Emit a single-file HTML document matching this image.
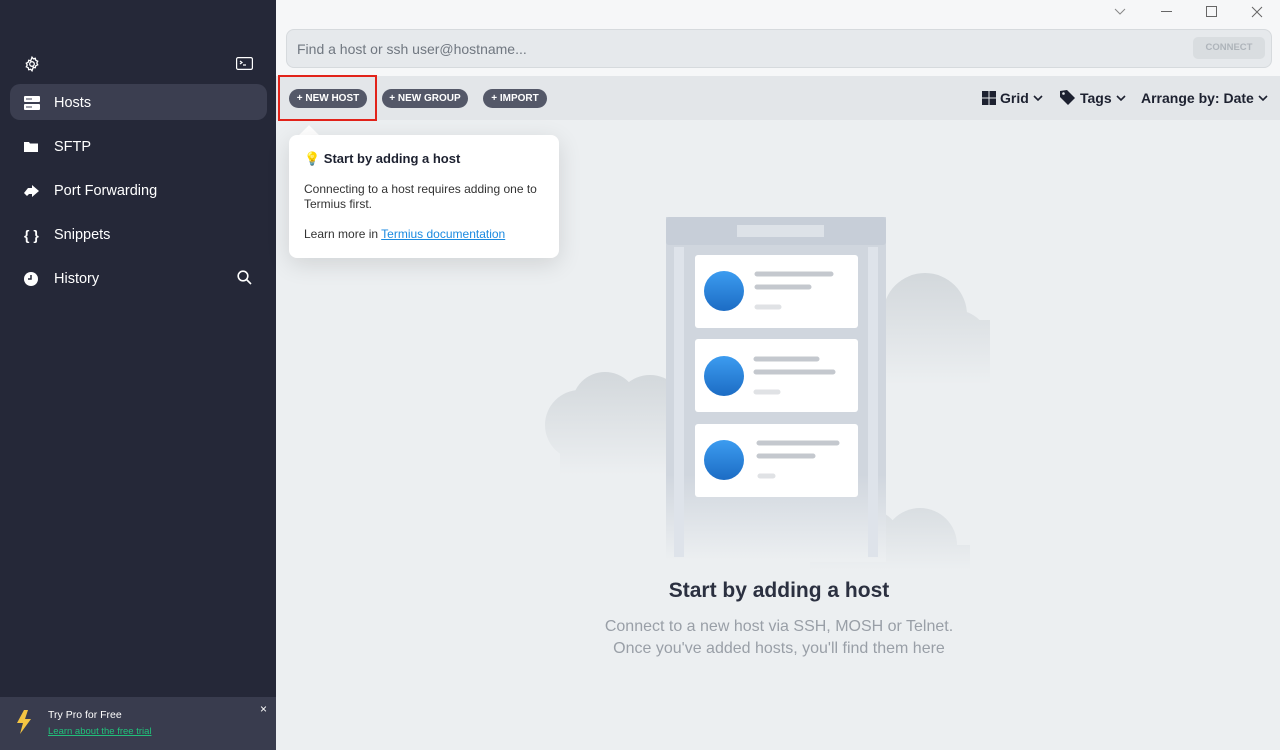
<!DOCTYPE html>
<html><head><meta charset="utf-8"><style>
*{margin:0;padding:0;box-sizing:border-box}
body{width:1280px;height:750px;overflow:hidden;font-family:"Liberation Sans",sans-serif;background:#eceff1;position:relative}
.sb{position:absolute;left:0;top:0;width:276px;height:750px;background:#252838;color:#fff}
.item{position:absolute;left:10px;width:257px;height:36px;border-radius:10px;font-size:14.5px;display:flex;align-items:center;padding-left:44px;padding-top:2px}
.item svg{position:absolute;left:14px}
.item.act{background:#3b3e50}
.pro{position:absolute;left:0;top:697px;width:276px;height:53px;background:#393c4e}
.top{position:absolute;left:276px;top:0;width:1004px;height:76px;background:#f6f7f8}
.search{position:absolute;left:286px;top:29px;width:986px;height:39px;border:1px solid #d6dadd;border-radius:8px;background:#e6e9ec;font-size:14px;color:#707780;padding:11px 10px}
.conn{position:absolute;right:6px;top:7px;width:72px;height:22px;border-radius:5px;background:#d9dde0;color:#aeb4ba;font-size:9.5px;font-weight:bold;text-align:center;line-height:22px}
.tb{position:absolute;left:276px;top:76px;width:1004px;height:44px;background:#e3e6e9}
.btn{position:absolute;top:89px;height:19px;border-radius:10px;background:#545868;color:#fff;font-size:10px;font-weight:bold;line-height:19px;text-align:center}
.tt{position:absolute;top:90px;font-size:14px;font-weight:bold;color:#1d2130;display:flex;align-items:center;gap:4px}
.pop{position:absolute;left:289px;top:135px;width:270px;height:123px;background:#fff;border-radius:8px;box-shadow:0 6px 24px rgba(0,0,0,.12);font-size:12px;color:#333;padding:0 15px}
</style></head><body>
<div class="sb">
<svg style="position:absolute;left:24px;top:56px" width="16" height="16" viewBox="0 0 16 16" fill="none" stroke="#fff" stroke-width="1.3"><circle cx="8" cy="8" r="2.3"/><path d="M8 1.2l1.3 1.6 2-.5.5 2 1.9.9-.9 1.8.9 1.8-1.9.9-.5 2-2-.5L8 14.8l-1.3-1.6-2 .5-.5-2-1.9-.9.9-1.8-.9-1.8 1.9-.9.5-2 2 .5z"/></svg>
<svg style="position:absolute;left:236px;top:57px" width="17" height="13" viewBox="0 0 17 13" fill="none" stroke="#fff" stroke-width="1.2"><rect x=".6" y=".6" width="15.8" height="11.8" rx="1.5"/><path d="M4 4l2 1.5L4 7M7 8h3"/></svg>
<div class="item act" style="top:84px"><svg width="16" height="14" viewBox="0 0 16 14"><rect x="0" y="0" width="16" height="6" rx="1" fill="#fff"/><rect x="0" y="8" width="16" height="6" rx="1" fill="#fff"/><path d="M3 2v2M5 2v2M7 2v2M3 10v2M5 10v2M7 10v2" stroke="#3b3e50"/></svg>Hosts</div>
<div class="item" style="top:128px"><svg width="14" height="12" viewBox="0 0 14 12"><path d="M0 1h5l1 1.5h8V11H0z" fill="#fff"/></svg>SFTP</div>
<div class="item" style="top:172px"><svg width="15" height="12" viewBox="0 0 15 12"><path d="M0 8l4-5h4V0l7 6-7 6V9H5L3 11z" fill="#fff"/></svg>Port Forwarding</div>
<div class="item" style="top:216px"><span style="position:absolute;left:14px;font-weight:bold;font-size:14px">{ }</span>Snippets</div>
<div class="item" style="top:260px"><svg width="14" height="14" viewBox="0 0 14 14"><circle cx="7" cy="7" r="7" fill="#fff"/><path d="M7 3v4H4" stroke="#252838" stroke-width="1.5" fill="none"/></svg>History</div>
<svg style="position:absolute;left:237px;top:270px" width="15" height="15" viewBox="0 0 15 15" fill="none" stroke="#fff" stroke-width="1.6"><circle cx="6" cy="6" r="4.8"/><path d="M9.5 9.5l4.5 4.5"/></svg>
<div class="pro">
<svg style="position:absolute;left:17px;top:13px" width="14" height="24" viewBox="0 0 14 24"><path d="M7 0L0 13h6l-3 11 11-15H8l3-9z" fill="#f5c542"/></svg>
<div style="position:absolute;left:48px;top:12px;font-size:10.5px;color:#fff">Try Pro for Free</div>
<div style="position:absolute;left:48px;top:29px;font-size:9.5px;color:#21c17a;text-decoration:underline">Learn about the free trial</div>
<div style="position:absolute;left:260px;top:5px;font-size:12px;color:#fff">×</div>
</div>
</div>
<div class="top">
<svg style="position:absolute;left:838px;top:8px" width="12" height="8" viewBox="0 0 12 8" fill="none" stroke="#888" stroke-width="1"><path d="M1 1l5 5 5-5"/></svg>
<div style="position:absolute;left:885px;top:11px;width:11px;height:1px;background:#666"></div>
<div style="position:absolute;left:930px;top:6px;width:11px;height:11px;border:1px solid #666"></div>
<svg style="position:absolute;left:975px;top:6px" width="12" height="12" viewBox="0 0 12 12" stroke="#666" stroke-width="1"><path d="M1 1l10 10M11 1L1 11"/></svg>
</div>
<div class="search">Find a host or ssh user@hostname...<div class="conn">CONNECT</div></div>
<div class="tb"></div>
<div style="position:absolute;left:278px;top:75px;width:99px;height:46px;border:2px solid #e2231a"></div>
<div class="btn" style="left:289px;width:78px">+ NEW HOST</div>
<div class="btn" style="left:382px;width:86px">+ NEW GROUP</div>
<div class="btn" style="left:483px;width:64px">+ IMPORT</div>
<div class="tt" style="left:982px"><svg width="14" height="14" viewBox="0 0 14 14" fill="#1d2130"><rect width="6.5" height="6.5"/><rect x="7.5" width="6.5" height="6.5"/><rect y="7.5" width="6.5" height="6.5"/><rect x="7.5" y="7.5" width="6.5" height="6.5"/></svg>Grid <svg width="10" height="6" viewBox="0 0 10 6" fill="none" stroke="#1d2130" stroke-width="1.6"><path d="M1 1l4 4 4-4"/></svg></div>
<div class="tt" style="left:1060px"><svg width="16" height="16" viewBox="0 0 16 16"><path d="M0 1v6l8 8 7-7-8-8z" fill="#1d2130"/><circle cx="3.5" cy="3.5" r="1.3" fill="#e3e6e9"/></svg>Tags <svg width="10" height="6" viewBox="0 0 10 6" fill="none" stroke="#1d2130" stroke-width="1.6"><path d="M1 1l4 4 4-4"/></svg></div>
<div class="tt" style="left:1141px">Arrange by: Date <svg width="10" height="6" viewBox="0 0 10 6" fill="none" stroke="#1d2130" stroke-width="1.6"><path d="M1 1l4 4 4-4"/></svg></div>
<div style="position:absolute;left:302px;top:128px;width:14px;height:14px;background:#fff;transform:rotate(45deg)"></div>
<div class="pop">
<div style="margin-top:16px;font-size:13px;font-weight:bold;color:#1d2130">💡 Start by adding a host</div>
<div style="margin-top:15px;line-height:15px">Connecting to a host requires adding one to Termius first.</div>
<div style="margin-top:15px">Learn more in <span style="color:#1b8ae0;text-decoration:underline">Termius documentation</span></div>
</div>
<svg style="position:absolute;left:540px;top:200px" width="460" height="370" viewBox="540 200 460 370">
<defs><linearGradient id="b" x1="0" y1="0" x2="0" y2="1"><stop offset="0" stop-color="#3c9cf0"/><stop offset="1" stop-color="#1c6cc4"/></linearGradient>
<linearGradient id="c1" gradientUnits="userSpaceOnUse" x1="0" y1="270" x2="0" y2="385"><stop offset="0" stop-color="#d2d7db"/><stop offset="1" stop-color="#eceff1"/></linearGradient>
<linearGradient id="c2" gradientUnits="userSpaceOnUse" x1="0" y1="370" x2="0" y2="475"><stop offset="0" stop-color="#d2d7db"/><stop offset="1" stop-color="#eceff1"/></linearGradient>
<linearGradient id="c3" gradientUnits="userSpaceOnUse" x1="0" y1="505" x2="0" y2="570"><stop offset="0" stop-color="#d8dde1"/><stop offset="1" stop-color="#eceff1"/></linearGradient>
<linearGradient id="r" gradientUnits="userSpaceOnUse" x1="0" y1="217" x2="0" y2="560"><stop offset=".75" stop-color="#d0d6de"/><stop offset="1" stop-color="#eceff1"/></linearGradient></defs>
<g fill="url(#c1)"><circle cx="925" cy="315" r="42"/><circle cx="955" cy="345" r="35"/><rect x="880" y="320" width="110" height="65"/></g>
<g fill="url(#c2)"><circle cx="605" cy="405" r="33"/><circle cx="580" cy="425" r="35"/><circle cx="650" cy="410" r="35"/><rect x="560" y="420" width="110" height="55"/></g>
<g fill="url(#c3)"><circle cx="920" cy="545" r="37"/><circle cx="870" cy="540" r="30"/><rect x="810" y="545" width="160" height="30"/></g>
<rect x="666" y="217" width="220" height="345" fill="url(#r)"/>
<rect x="666" y="217" width="220" height="28" rx="3" fill="#c7ced8"/>
<rect x="737" y="225" width="87" height="12" fill="#dde2e8"/>
<rect x="674" y="247" width="10" height="310" fill="#dee3ea"/><rect x="868" y="247" width="10" height="310" fill="#dee3ea"/>
<g fill="#fff"><rect x="695" y="255" width="163" height="73" rx="3"/><rect x="695" y="339" width="163" height="73" rx="3"/><rect x="695" y="424" width="163" height="73" rx="3"/></g>
<g fill="url(#b)"><circle cx="724" cy="291" r="20"/><circle cx="724" cy="376" r="20"/><circle cx="724" cy="460" r="20"/></g>
<g stroke="#c4c8ce" stroke-width="5" stroke-linecap="round"><path d="M757 274h74M757 287h52M756 359h61M756 372h77M759 443h78M759 456h54"/></g>
<g stroke="#e0e2e5" stroke-width="5" stroke-linecap="round"><path d="M757 307h22M756 392h22M760 476h13"/></g>
</svg>
<div style="position:absolute;left:540px;width:478px;top:579px;text-align:center;font-size:21px;font-weight:bold;color:#2b3040">Start by adding a host</div>
<div style="position:absolute;left:540px;width:478px;top:616px;text-align:center;font-size:16px;line-height:22px;color:#999fa7">Connect to a new host via SSH, MOSH or Telnet.<br>Once you've added hosts, you'll find them here</div>
</body></html>
